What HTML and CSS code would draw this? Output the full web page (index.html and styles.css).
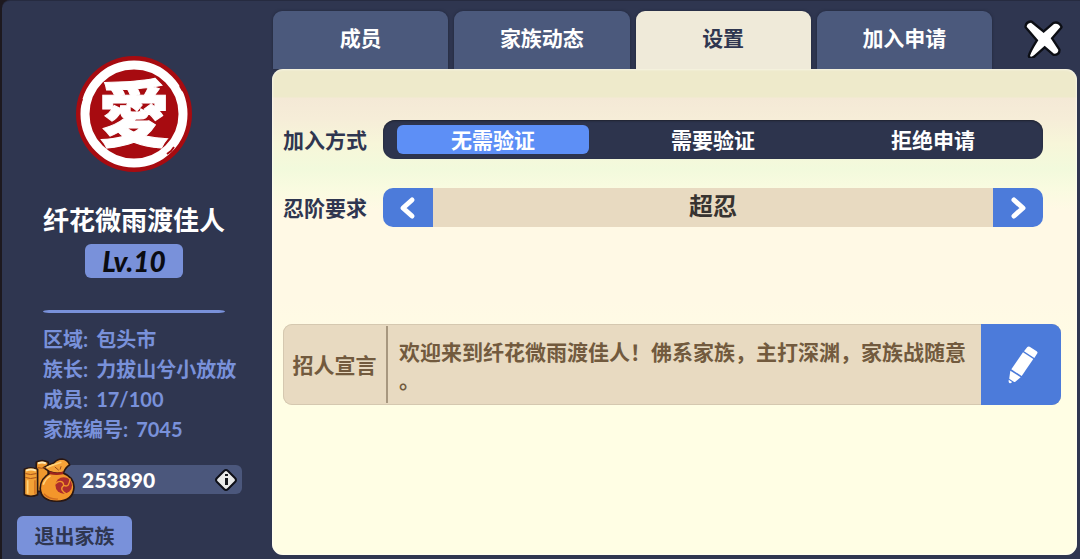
FILE: index.html
```html
<!DOCTYPE html>
<html lang="zh-CN">
    <head>
        <meta charset="utf-8">
        <title>家族设置</title>
        <link rel="stylesheet" href="styles.css">
    </head>
    <body>
        <div class="app">
            <aside class="sidebar">
                <svg class="emblem" viewBox="0 0 116 116" aria-hidden="true">
                    <circle cx="58" cy="58" r="58" fill="#a70b10"/>
                    <circle cx="58" cy="58" r="49" fill="none" stroke="#fff" stroke-width="9"/>
                    <path d="M91 98l4-3 3-4M6 43l-2 6M104 30l3 5" fill="none" stroke="#a70b10" stroke-width="2"/>
                    <text class="emblem-text" x="58" y="84" text-anchor="middle">愛</text>
                </svg>
                <h1 class="name">纤花微雨渡佳人</h1>
                <div class="level">Lv.10</div>
                <hr class="divider">
                <dl class="info">
                    <div><dt>区域:</dt><dd>包头市</dd></div>
                    <div><dt>族长:</dt><dd>力拔山兮小放放</dd></div>
                    <div><dt>成员:</dt><dd>17/100</dd></div>
                    <div><dt>家族编号:</dt><dd>7045</dd></div>
                </dl>
                <div class="money">
                    <svg class="bag" viewBox="36 34 160 136" aria-hidden="true">
                        <g stroke="#2a1712" stroke-width="5" stroke-linejoin="round">
                            <path d="M76 50q17-10 36 0v88H76z" fill="#ee982e"/>
                            <path d="M40 71q18-9 40 0v77q-20 9-40 0z" fill="#f3a136"/>
                            <path d="M119 82q-31 16-31 47 2 37 50 39 50-1 52-43-1-31-34-43z" fill="#f3962b"/>
                            <path d="M117 79L98 66q18-11 31-14 10-12 25-12 18 2 23 18-12 6-18 22-20 7-42-1z" fill="#f6a238"/>
                        </g>
                        <path d="M43 84q15 6 34 0M43 96q15 6 34 0M80 66q12 4 25 0" fill="none" stroke="#a8521b" stroke-width="3"/>
                        <path d="M45 75q15-6 30 0M81 53q13-5 24 0" fill="none" stroke="#ffe9b5" stroke-width="6"/>
                        <path d="M50 104v41M97 118q6-18 22-27M107 66q20-9 45-16" fill="none" stroke="#ffd279" stroke-width="5"/>
                        <path d="M72 104v41M99 145q15 17 42 16" fill="none" stroke="#cf6c20" stroke-width="4"/>
                        <path d="M116 77q20 8 42 1l-1 8q-20 5-40 0z" fill="#9e231d"/>
                        <path d="M132 64l12 10M151 62l-3 10" stroke="#9c4c1d" stroke-width="3"/>
                        <circle cx="159" cy="120" r="25" fill="#ad2d2c"/>
                        <path d="M159 120q-1-11-9-12t-15 6M159 120q10 4 14-2t5-19M159 120q-9 7-5 14t14 12" fill="none" stroke="#f3962b" stroke-width="4"/>
                    </svg>
                    <span class="amount">253890</span>
                    <button class="tip" type="button" aria-label="说明">
                        <svg viewBox="0 0 24 24" width="24" height="24">
                            <path d="M10 3q2-2 4 0l7 7q2 2 0 4l-7 7q-2 2-4 0l-7-7q-2-2 0-4z" fill="#e9eae9" stroke="#0e1018" stroke-width="2"/>
                            <path d="M11 6h3v2h-3zM11 10h3v7h-3z" fill="#17191e"/>
                        </svg>
                    </button>
                </div>
                <button class="quit" type="button">退出家族</button>
            </aside>
            <main class="main">
                <div class="top">
                    <nav class="tabs">
                        <button class="tab" type="button">成员</button>
                        <button class="tab" type="button">家族动态</button>
                        <button class="tab active" type="button">设置</button>
                        <button class="tab" type="button">加入申请</button>
                    </nav>
                    <button class="close" type="button" aria-label="关闭">
                        <svg viewBox="15 15 120 120" width="40" height="40">
                            <path d="M26 41q1-11 13-12l38 31 31-27q12-4 19 9L98 76l23 35q0 11-13 11L80 98l-32 29q-9 7-12 2 3-12 25-47z" fill="#fff" stroke="#0c0e14" stroke-width="14" stroke-linejoin="round" paint-order="stroke"/>
                        </svg>
                    </button>
                </div>
                <form class="panel">
                    <div class="row" role="radiogroup" aria-labelledby="join-label">
                        <span class="label" id="join-label">加入方式</span>
                        <div class="segment">
                            <label class="option"><input type="radio" name="join" checked><span>无需验证</span></label>
                            <label class="option"><input type="radio" name="join"><span>需要验证</span></label>
                            <label class="option"><input type="radio" name="join"><span>拒绝申请</span></label>
                        </div>
                    </div>
                    <div class="row">
                        <label class="label" for="rank">忍阶要求</label>
                        <div class="stepper">
                            <button class="step" type="button" aria-label="上一个">
                                <svg viewBox="0 0 20 24" width="20" height="24"><path d="M14 4l-9 8 9 8"/></svg>
                            </button>
                            <output class="rank" id="rank">超忍</output>
                            <button class="step step-next" type="button" aria-label="下一个">
                                <svg viewBox="0 0 20 24" width="20" height="24"><path d="M6 4l9 8-9 8"/></svg>
                            </button>
                        </div>
                    </div>
                    <section class="notice">
                        <h2 class="notice-title">招人宣言</h2>
                        <p class="notice-text">欢迎来到纤花微雨渡佳人！佛系家族，主打深渊，家族战随意。</p>
                        <button class="edit" type="button" aria-label="编辑">
                            <svg viewBox="1046 109 90 114" width="30" height="38" fill="#fff">
                                <path d="M1104 112q3-3 7-1l21 14q4 3 2 6l-9 14-31-20z"/>
                                <path d="M1091 128l31 20-35 51-31-20z"/>
                                <path d="M1053 183l31 20-16 13q-3 2-7-1l-9-6q-3-2-2-5z"/>
                                <path d="M1048 210l10 7q-2 4-6 4-5-1-4-11z"/>
                            </svg>
                        </button>
                    </section>
                </form>
            </main>
        </div>
    </body>
</html>
```

FILE: styles.css
```css
* {
    box-sizing: border-box;
}
body {
    margin: 0;
    background: #1d191f;
    font-family: Lato, "Noto Sans CJK SC", sans-serif;
    font-size: 21px;
    font-weight: 700;
    line-height: 30px;
}
button {
    border: 0;
    padding: 0;
    font: inherit;
    color: inherit;
    cursor: pointer;
}
svg {
    display: block;
}
.app {
    display: flex;
    min-height: 100vh;
    margin-left: 2px;
    border-top: 1px solid #262b40;
    border-radius: 8px 0 0 0;
    background: #2f3650;
}
.sidebar {
    display: flex;
    flex-direction: column;
    align-items: center;
    width: 270px;
    flex-shrink: 0;
    padding: 55px 6px 3px 0;
}
.emblem {
    width: 116px;
    height: 116px;
}
.emblem-text {
    fill: #fff;
    stroke: #fff;
    stroke-width: 1px;
    font-family: "Noto Sans CJK TC", sans-serif;
    font-size: 72px;
    font-weight: 900;
}
.name {
    margin: 32px 0 0;
    color: #fff;
    font-size: 26px;
    line-height: 32px;
}
.level {
    margin-top: 8px;
    padding: 0 17px;
    border-radius: 6px;
    background: #7991da;
    color: #0b0c12;
    font-size: 28px;
    font-weight: 900;
    font-style: italic;
    line-height: 34px;
}
.divider {
    width: 182px;
    height: 3px;
    margin: 32px 0 0;
    border: 0;
    border-radius: 8px / 2px;
    background: #7991da;
}
.info {
    align-self: stretch;
    margin: 11px 0 0;
    padding-left: 41px;
    color: #7991da;
    font-size: 20px;
}
.info div {
    display: flex;
    gap: 8px;
}
.info dd {
    margin: 0;
}
.money {
    display: flex;
    align-items: center;
    align-self: stretch;
    height: 29px;
    margin: 21px 24px 0 43px;
    padding-right: 4px;
    border-radius: 6px;
    background: #4b577c;
    color: #fff;
    font-weight: 900;
}
.bag {
    width: 53px;
    height: 45px;
    margin-left: -22px;
}
.amount {
    flex: 1;
    margin-left: 6px;
}
.tip {
    background: none;
}
.quit {
    align-self: flex-start;
    width: 115px;
    height: 39px;
    margin: 22px 0 0 15px;
    border-radius: 6px;
    background: #7991da;
    color: #2f3650;
    font-size: 20px;
}
.main {
    display: flex;
    flex: 1;
    flex-direction: column;
    padding: 10px 3px 4px 0;
}
.top {
    display: flex;
}
.tabs {
    display: grid;
    flex: 1;
    grid-template-columns: repeat(4, 1fr);
    gap: 6px;
    padding-left: 1px;
}
.tab {
    height: 58px;
    padding-bottom: 4px;
    border-radius: 9px 9px 0 0;
    background: #4b597c;
    box-shadow: 0 0 3px #20263b;
    color: #fff;
}
.tab.active {
    background: #efead9;
    color: #2f3650;
}
.close {
    width: 85px;
    padding: 0 14px 4px 31px;
    background: none;
}
.panel {
    position: relative;
    display: flex;
    flex: 1;
    flex-direction: column;
    gap: 29px;
    padding: 51px 16px 20px 11px;
    border-radius: 11px;
    background: linear-gradient(#eeeacb 0, #eeeacb 28px, #f4e9d6 29px, #f6edd8 50px, #f7f6d9 75px, #f2fadc 100px, #f9fbe0 119px, #fff9e5 140px, #fff9e5 230px, #fffee4 320px);
    box-shadow: inset 0 0 3px #fff;
}
.row {
    display: flex;
    align-items: center;
    padding-right: 18px;
    color: #2f3650;
}
.label {
    width: 100px;
}
.segment {
    display: grid;
    flex: 1;
    grid-template-columns: repeat(3, 1fr);
    padding: 5px 0;
    border-radius: 12px;
    background: #2d344d;
    box-shadow: inset 0 1px 2px #20232f;
    color: #fff;
}
.option {
    position: relative;
    padding: 0 14px;
    text-align: center;
    cursor: pointer;
}
.option input {
    position: absolute;
    margin: 0;
    opacity: 0;
}
.option span {
    display: block;
    border-radius: 6px;
    line-height: 29px;
}
.option input:checked + span {
    background: #5d8ff6;
}
.stepper {
    display: flex;
    flex: 1;
    height: 39px;
}
.step {
    display: flex;
    align-items: center;
    justify-content: center;
    width: 50px;
    border-radius: 10px 0 0 10px;
    background: #4c7bda;
}
.step-next {
    border-radius: 0 10px 10px 0;
}
.step path {
    fill: none;
    stroke: #fff;
    stroke-width: 5;
    stroke-linecap: round;
    stroke-linejoin: round;
}
.rank {
    flex: 1;
    background: #e8dac1;
    color: #373330;
    font-size: 24px;
    line-height: 36px;
    text-align: center;
}
.notice {
    display: flex;
    min-height: 81px;
    margin-top: 68px;
    border-radius: 9px;
    background: #e8dac1;
    box-shadow: inset 0 0 0 1px #d5c8b0;
    color: #725a3e;
}
.notice-title {
    align-self: center;
    width: 103px;
    margin: 0;
    font-size: 21px;
    text-align: center;
}
.notice-text {
    flex: 1;
    margin: 2px 0;
    padding: 12px 14px 0 11px;
    border-left: 2px solid #a7977f;
    line-height: 28px;
    /* lets a full stop start the next line */
    line-break: anywhere;
}
.edit {
    display: flex;
    align-items: center;
    justify-content: center;
    width: 80px;
    padding-left: 4px;
    border-radius: 0 9px 9px 0;
    background: #4c7bda;
}
```
